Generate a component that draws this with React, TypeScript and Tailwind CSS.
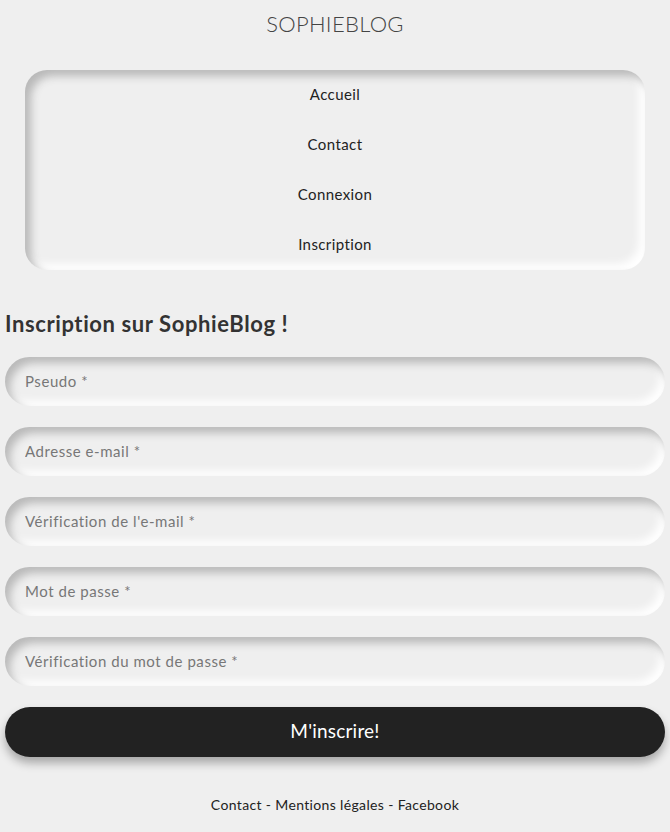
import React from "react";

const fields = [
  "Pseudo *",
  "Adresse e-mail *",
  "Vérification de l'e-mail *",
  "Mot de passe *",
  "Vérification du mot de passe *",
];

const links = ["Accueil", "Contact", "Connexion", "Inscription"];

export default function App() {
  return (
    <div className="min-h-[832px] bg-[#efefef] font-['Lato',sans-serif] text-[#222]">
      <header className="pt-[11px] text-center">
        <h1 className="text-[22px] leading-[26px] font-light text-[#444] tracking-[0.3px]">SOPHIEBLOG</h1>
      </header>

      {/* menu */}
      <nav className="mx-[25px] mt-[33px] h-[200px] rounded-[22px] bg-[#efefef] shadow-[inset_6px_6px_8px_#b9b9b9,inset_-6px_-6px_8px_#ffffff] flex flex-col items-center">
        {links.map((l) => (
          <a key={l} href="#" className="h-[50px] flex items-center text-[15px] tracking-[0.4px] text-[#222] pb-[1px]">
            {l}
          </a>
        ))}
      </nav>

      <main className="px-[5px] mt-[40px]">
        <h2 className="text-[22px] leading-[28px] font-bold text-[#333] tracking-[0.6px]">Inscription sur SophieBlog !</h2>
        <form className="mt-[19px] flex flex-col gap-[21px]" onSubmit={(e) => e.preventDefault()}>
          {fields.map((f) => (
            <input
              key={f}
              placeholder={f}
              className="h-[49px] w-full rounded-full bg-[#efefef] pl-[20px] pb-[2px] text-[15px] tracking-[0.55px] text-[#333] placeholder:text-[#777] outline-none shadow-[inset_5px_6px_8px_#b9b9b9,inset_-5px_-5px_8px_#ffffff]"
            />
          ))}
          <button
            type="submit"
            className="h-[50px] w-full rounded-full bg-[#222] text-white text-[19px] tracking-[0.2px] pb-[2px] shadow-[0_6px_10px_rgba(0,0,0,0.3)]"
          >
            M'inscrire!
          </button>
        </form>
      </main>

      <footer className="mt-[37px] text-center text-[14px] tracking-[0.35px] text-[#222]">
        <a href="#">Contact</a> - <a href="#">Mentions légales</a> - <a href="#">Facebook</a>
      </footer>
    </div>
  );
}
